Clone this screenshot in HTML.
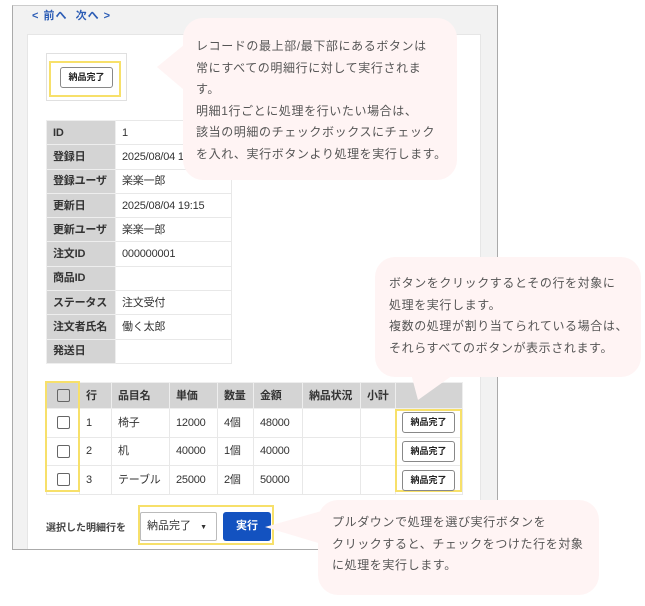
<!DOCTYPE html>
<html><head><meta charset="utf-8">
<style>
*{box-sizing:border-box;margin:0;padding:0}
body{width:645px;height:606px;background:#fff;position:relative;overflow:hidden;font-family:"Liberation Sans","Noto Sans CJK JP",sans-serif;color:#333}
.abs{position:absolute}
.frame{left:12px;top:5px;width:486px;height:545px;border:1px solid #aaa;border-top-color:#ccc;background:#f2f2f2}
.card{left:27px;top:34px;width:454px;height:515px;background:#fff;border:1px solid #e6e6e6;border-bottom:none}
.nav{left:32px;top:7px;font-size:11px;font-weight:bold;color:#2b5cb5;letter-spacing:1px}
.ybox{border:2px solid #f7e06a}
.btn{border:1px solid #888;border-radius:3px;background:#fff;font-size:9px;font-weight:bold;color:#222;text-align:center;line-height:19px;white-space:nowrap}
table{border-collapse:collapse;position:absolute;font-size:11px;table-layout:fixed}
td{border:1px solid #e8e8e8;padding:0 0 0 6px;white-space:nowrap;overflow:hidden;letter-spacing:-0.2px;vertical-align:middle;line-height:14px}
.info td{height:24.3px}
.info td.l{background:#d4d4d4;font-weight:bold;border-color:#eee}
.det td{height:28.5px}
.det tr.h td{background:#d4d4d4;font-weight:bold;height:26px;border-color:#eee}
.cb{display:inline-block;width:13px;height:13px;border:1.5px solid #666;border-radius:2px;vertical-align:middle}
.bub{background:#fff4f4;border-radius:20px;font-size:12px;color:#555;letter-spacing:0.6px;line-height:21.5px;white-space:nowrap}
</style></head><body>
<div class="abs frame"></div>
<div class="abs card"></div>
<div class="abs nav">&lt; 前へ &nbsp;次へ &gt;</div>

<div class="abs" style="left:46px;top:53px;width:81px;height:48px;border:1px solid #e0e0e0"></div>
<div class="abs ybox" style="left:49px;top:61px;width:72px;height:36px"></div>
<div class="abs btn" style="left:60px;top:67px;width:53px;height:21px">納品完了</div>

<table class="info" style="left:46px;top:120px;width:185px">
<colgroup><col style="width:69px"><col style="width:116px"></colgroup>
<tr><td class="l">ID</td><td>1</td></tr>
<tr><td class="l">登録日</td><td>2025/08/04 19:15</td></tr>
<tr><td class="l">登録ユーザ</td><td>楽楽一郎</td></tr>
<tr><td class="l">更新日</td><td>2025/08/04 19:15</td></tr>
<tr><td class="l">更新ユーザ</td><td>楽楽一郎</td></tr>
<tr><td class="l">注文ID</td><td>000000001</td></tr>
<tr><td class="l">商品ID</td><td></td></tr>
<tr><td class="l">ステータス</td><td>注文受付</td></tr>
<tr><td class="l">注文者氏名</td><td>働く太郎</td></tr>
<tr><td class="l">発送日</td><td></td></tr>
</table>

<table class="det" style="left:46px;top:382px;width:416px">
<colgroup><col style="width:33px"><col style="width:32px"><col style="width:58px"><col style="width:48px"><col style="width:36px"><col style="width:49px"><col style="width:58px"><col style="width:35px"><col style="width:67px"></colgroup>
<tr class="h"><td style="text-align:center;padding:0"><span class="cb"></span></td><td>行</td><td>品目名</td><td>単価</td><td>数量</td><td>金額</td><td>納品状況</td><td>小計</td><td></td></tr>
<tr><td style="text-align:center;padding:0"><span class="cb"></span></td><td>1</td><td>椅子</td><td>12000</td><td>4個</td><td>48000</td><td></td><td></td><td></td></tr>
<tr><td style="text-align:center;padding:0"><span class="cb"></span></td><td>2</td><td>机</td><td>40000</td><td>1個</td><td>40000</td><td></td><td></td><td></td></tr>
<tr><td style="text-align:center;padding:0"><span class="cb"></span></td><td>3</td><td>テーブル</td><td>25000</td><td>2個</td><td>50000</td><td></td><td></td><td></td></tr>
</table>
<div class="abs ybox" style="left:45px;top:381px;width:35px;height:111px"></div>
<div class="abs ybox" style="left:395px;top:409px;width:67px;height:83px"></div>
<div class="abs btn" style="left:402px;top:412px;width:53px;height:21px">納品完了</div>
<div class="abs btn" style="left:402px;top:441px;width:53px;height:21px">納品完了</div>
<div class="abs btn" style="left:402px;top:470px;width:53px;height:21px">納品完了</div>

<div class="abs" style="left:46px;top:519px;font-size:10px;font-weight:bold;color:#444">選択した明細行を</div>
<div class="abs ybox" style="left:138px;top:505px;width:136px;height:40px"></div>
<div class="abs" style="left:140px;top:512px;width:77px;height:29px;border:1px solid #bbb;border-radius:2px;font-size:11px;line-height:27px;padding-left:6px;background:#fff;white-space:nowrap">納品完了 <span style="font-size:7px;margin-left:6px">▼</span></div>
<div class="abs" style="left:223px;top:512px;width:48px;height:29px;background:#1352c0;border-radius:3px;color:#fff;font-size:11px;font-weight:bold;text-align:center;line-height:29px">実行</div>

<svg class="abs" style="left:0;top:0" width="645" height="606">
<polygon points="157,67 190,40 190,95" fill="#fff4f4"/>
<polygon points="418,400 410,370 460,370" fill="#fff4f4"/>
<polygon points="265,527 325,510 325,545" fill="#fff4f4"/>
</svg>
<div class="abs bub" style="left:183px;top:18px;width:274px;height:162px;padding:18px 0 0 13px">レコードの最上部/最下部にあるボタンは<br>常にすべての明細行に対して実行されま<br>す。<br>明細1行ごとに処理を行いたい場合は、<br>該当の明細のチェックボックスにチェック<br>を入れ、実行ボタンより処理を実行します。</div>
<div class="abs bub" style="left:375px;top:257px;width:266px;height:120px;padding:16px 0 0 14px">ボタンをクリックするとその行を対象に<br>処理を実行します。<br>複数の処理が割り当てられている場合は、<br>それらすべてのボタンが表示されます。</div>
<div class="abs bub" style="left:318px;top:500px;width:281px;height:95px;padding:12px 0 0 14px">プルダウンで処理を選び実行ボタンを<br>クリックすると、チェックをつけた行を対象<br>に処理を実行します。</div>
</body></html>
